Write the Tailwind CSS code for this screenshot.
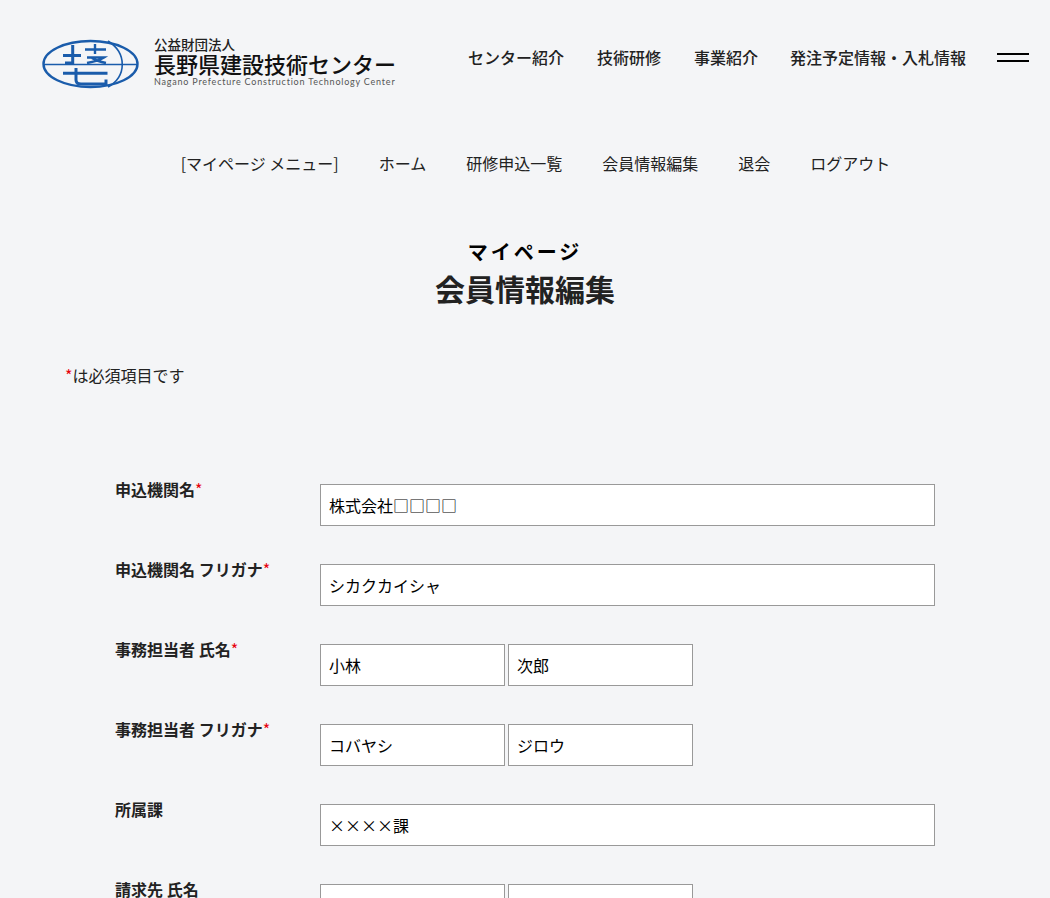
<!DOCTYPE html>
<html lang="ja">
<head>
<meta charset="utf-8">
<title>会員情報編集</title>
<script src="https://cdn.jsdelivr.net/npm/@tailwindcss/browser@4"></script>
</head>
<body class="bg-[#f4f5f7]">
<div class="h-[898px] overflow-hidden bg-[#f4f5f7] text-[#222] font-['Noto_Sans_CJK_JP',sans-serif]">
  <header class="flex items-center justify-between h-[114px] pl-[42px] pr-[21px]">
    <a class="flex items-start gap-[15px] mt-[14px]">
      <svg class="w-[97px] h-[50px] shrink-0" viewBox="0 0 97 50" fill="none" stroke="#1a5cab">
        <ellipse cx="48.5" cy="25" rx="47" ry="23" stroke-width="2.4"/>
        <path d="M1 25.5H96" stroke-width="1.6"/>
        <path d="M66 2C85 14 85 37 66 48" stroke-width="1.6"/>
        <g stroke-width="3">
          <path d="M21 16.5H39M30.7 6V24H23"/>
          <path d="M43 10.5H64M53 5V15M45 18.5H62C58 21 51 23 45 24M50 19C53 21 59 23 64 24" stroke-width="2.4"/>
          <path d="M21 34.3H65.5M34 29V41C34 44 36 45 39 45H64V40.5"/>
        </g>
      </svg>
      <div class="flex flex-col items-start -mt-[1px]">
        <span class="text-[13.5px] leading-[13px] text-[#222] font-medium">公益財団法人</span>
        <span class="text-[22px] leading-[25px] font-medium text-[#111] whitespace-nowrap">長野県建設技術センター</span>
        <span class="text-[9px] leading-[11px] tracking-[0.79px] text-[#555] font-['Lato',sans-serif] whitespace-nowrap">Nagano Prefecture Construction Technology Center</span>
      </div>
    </a>
    <nav class="flex items-center text-[16px] font-medium text-[#222] -ml-[1px]">
      <a class="mr-[33px]">センター紹介</a>
      <a class="mr-[33px]">技術研修</a>
      <a class="mr-[32px]">事業紹介</a>
      <a class="mr-[31px]">発注予定情報・入札情報</a>
      <span class="flex flex-col gap-[5px] w-[32px]">
        <span class="block h-[2px] bg-black"></span>
        <span class="block h-[2px] bg-black"></span>
      </span>
    </nav>
  </header>

  <nav class="flex justify-center gap-[40px] pt-[37px] pl-[21px] text-[16px] leading-[24px] text-[#222]">
    <span>[マイページ メニュー]</span>
    <a>ホーム</a>
    <a>研修申込一覧</a>
    <a>会員情報編集</a>
    <a>退会</a>
    <a>ログアウト</a>
  </nav>

  <div class="pt-[63px] text-center">
    <p class="text-[20px] leading-[28px] font-bold tracking-[3px] text-black">マイページ</p>
    <h1 class="text-[30px] leading-[45px] font-bold text-[#222]">会員情報編集</h1>
  </div>

  <p class="mt-[52px] pl-[65px] text-[16px] leading-[24px]"><span class="text-red-600">*</span>は必須項目です</p>

  <form class="mt-[97px] pl-[115px] flex flex-col gap-[38px]">
    <div class="flex">
      <label class="w-[205px] shrink-0 text-[16px] leading-[24px] font-bold -mt-[7px]">申込機関名<span class="text-red-600 font-normal">*</span></label>
      <input class="w-[615px] h-[42px] border border-[#999] bg-white px-[8px] text-[16px] text-black" value="株式会社□□□□">
    </div>
    <div class="flex">
      <label class="w-[205px] shrink-0 text-[16px] leading-[24px] font-bold -mt-[7px]">申込機関名 フリガナ<span class="text-red-600 font-normal">*</span></label>
      <input class="w-[615px] h-[42px] border border-[#999] bg-white px-[8px] text-[16px] text-black" value="シカクカイシャ">
    </div>
    <div class="flex">
      <label class="w-[205px] shrink-0 text-[16px] leading-[24px] font-bold -mt-[7px]">事務担当者 氏名<span class="text-red-600 font-normal">*</span></label>
      <div class="flex gap-[3px]">
        <input class="w-[185px] h-[42px] border border-[#999] bg-white px-[8px] text-[16px] text-black" value="小林">
        <input class="w-[185px] h-[42px] border border-[#999] bg-white px-[8px] text-[16px] text-black" value="次郎">
      </div>
    </div>
    <div class="flex">
      <label class="w-[205px] shrink-0 text-[16px] leading-[24px] font-bold -mt-[7px]">事務担当者 フリガナ<span class="text-red-600 font-normal">*</span></label>
      <div class="flex gap-[3px]">
        <input class="w-[185px] h-[42px] border border-[#999] bg-white px-[8px] text-[16px] text-black" value="コバヤシ">
        <input class="w-[185px] h-[42px] border border-[#999] bg-white px-[8px] text-[16px] text-black" value="ジロウ">
      </div>
    </div>
    <div class="flex">
      <label class="w-[205px] shrink-0 text-[16px] leading-[24px] font-bold -mt-[7px]">所属課</label>
      <input class="w-[615px] h-[42px] border border-[#999] bg-white px-[8px] text-[16px] text-black" value="××××課">
    </div>
    <div class="flex">
      <label class="w-[205px] shrink-0 text-[16px] leading-[24px] font-bold -mt-[7px]">請求先 氏名</label>
      <div class="flex gap-[3px]">
        <input class="w-[185px] h-[42px] border border-[#999] bg-white px-[8px] text-[16px] text-black">
        <input class="w-[185px] h-[42px] border border-[#999] bg-white px-[8px] text-[16px] text-black">
      </div>
    </div>
  </form>
</div>
</body>
</html>
